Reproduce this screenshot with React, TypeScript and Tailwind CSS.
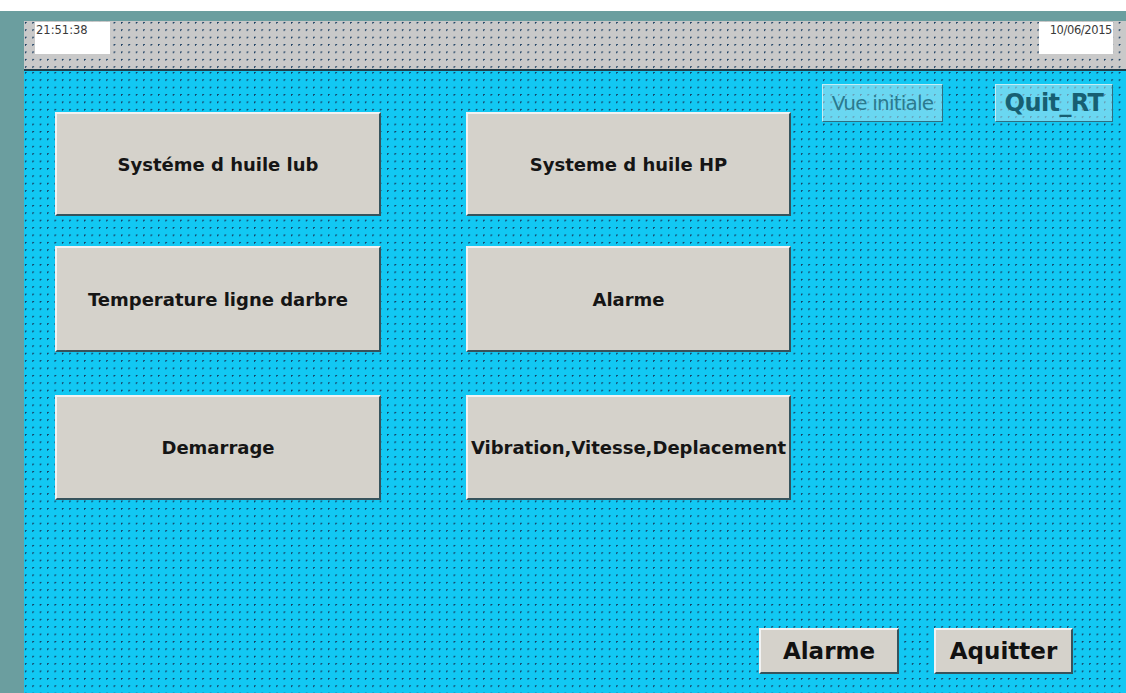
import React from 'react';

const dots =
  'bg-[radial-gradient(circle_at_1.5px_1.5px,#163a5e_0.8px,transparent_1px)] bg-size-[7.4px_7.4px]';

const MenuButton = ({ label }: { label: string }) => (
  <button className="flex-1 flex items-center justify-center bg-[#d5d2cb] border-2 border-t-[#f2f2f2] border-l-[#f2f2f2] border-b-[#36535c] border-r-[#36535c] text-[18px] font-bold text-[#151515] whitespace-nowrap">
    {label}
  </button>
);

const App = () => {
  const left = ['Systéme d huile lub', 'Temperature ligne darbre', 'Demarrage'];
  const right = ['Systeme d huile HP', 'Alarme', 'Vibration,Vitesse,Deplacement'];

  return (
    <div
      className="w-[1126px] h-[693px] flex flex-col bg-white overflow-hidden"
      style={{ fontFamily: '"DejaVu Sans", Tahoma, sans-serif' }}
    >
      <div className="h-[11px] bg-white" />
      <div className="flex flex-1">
        {/* left frame */}
        <div className="w-[24px] bg-[#6b9e9f]" />
        <div className="flex-1 flex flex-col">
          <div className="h-[10px] bg-[#6b9e9f]" />

          {/* header with time / date */}
          <div className={`h-[48px] bg-[#c9c9c9] ${dots} flex justify-between items-start pt-[1px] pl-[11px] pr-[13px]`}>
            <div className="w-[75px] h-[32px] bg-white text-[11.5px] leading-[16px] text-[#3a3a3a] px-[1px]">21:51:38</div>
            <div className="w-[74px] h-[32px] bg-white text-[11.5px] leading-[16px] text-[#3a3a3a] text-right pr-[1px] tracking-[-0.4px]">10/06/2015</div>
          </div>
          <div className="h-[2px] bg-[#1e3f4c]" />

          {/* main view */}
          <div className={`flex-1 flex flex-col bg-[#12c8f3] ${dots}`}>
            <div className="flex">
              <div className="pl-[31px] pt-[41px] grid grid-cols-[326px_325px] gap-x-[85px]">
                <div className="flex flex-col">
                  <div className="h-[104px] flex"><MenuButton label={left[0]} /></div>
                  <div className="h-[106px] mt-[30px] flex"><MenuButton label={left[1]} /></div>
                  <div className="h-[105px] mt-[43px] flex"><MenuButton label={left[2]} /></div>
                </div>
                <div className="flex flex-col">
                  <div className="h-[104px] flex"><MenuButton label={right[0]} /></div>
                  <div className="h-[106px] mt-[30px] flex"><MenuButton label={right[1]} /></div>
                  <div className="h-[105px] mt-[43px] flex"><MenuButton label={right[2]} /></div>
                </div>
              </div>
              <div className="flex-1 flex justify-end items-start pt-[13px] pr-[13px] gap-[52px]">
                <div className="w-[121px] h-[38px] flex items-center justify-center bg-[#b2e4ee]/55 border border-t-[#c4ecf4] border-l-[#c4ecf4] border-b-[#2f6f80] border-r-[#2f6f80] text-[20px] text-[#2a7a8f] tracking-[-0.8px] whitespace-nowrap">
                  Vue initiale
                </div>
                <div className="w-[118px] h-[38px] flex items-center justify-center bg-[#b2e4ee]/55 border border-t-[#c4ecf4] border-l-[#c4ecf4] border-b-[#2f6f80] border-r-[#2f6f80] text-[24px] font-bold text-[#175f72] tracking-[-0.6px] whitespace-nowrap">
                  Quit_RT
                </div>
              </div>
            </div>

            <div className="flex-1" />

            {/* bottom buttons */}
            <div className="flex justify-end gap-[35px] pr-[53px] pb-[19px]">
              <button className="w-[140px] h-[46px] flex items-center justify-center bg-[#d5d2cb] border-2 border-t-[#f2f2f2] border-l-[#f2f2f2] border-b-[#36535c] border-r-[#36535c] text-[23px] font-bold text-[#111]">
                Alarme
              </button>
              <button className="w-[139px] h-[46px] flex items-center justify-center bg-[#d5d2cb] border-2 border-t-[#f2f2f2] border-l-[#f2f2f2] border-b-[#36535c] border-r-[#36535c] text-[23px] font-bold text-[#111]">
                Aquitter
              </button>
            </div>
          </div>
        </div>
      </div>
    </div>
  );
};

export default App;
